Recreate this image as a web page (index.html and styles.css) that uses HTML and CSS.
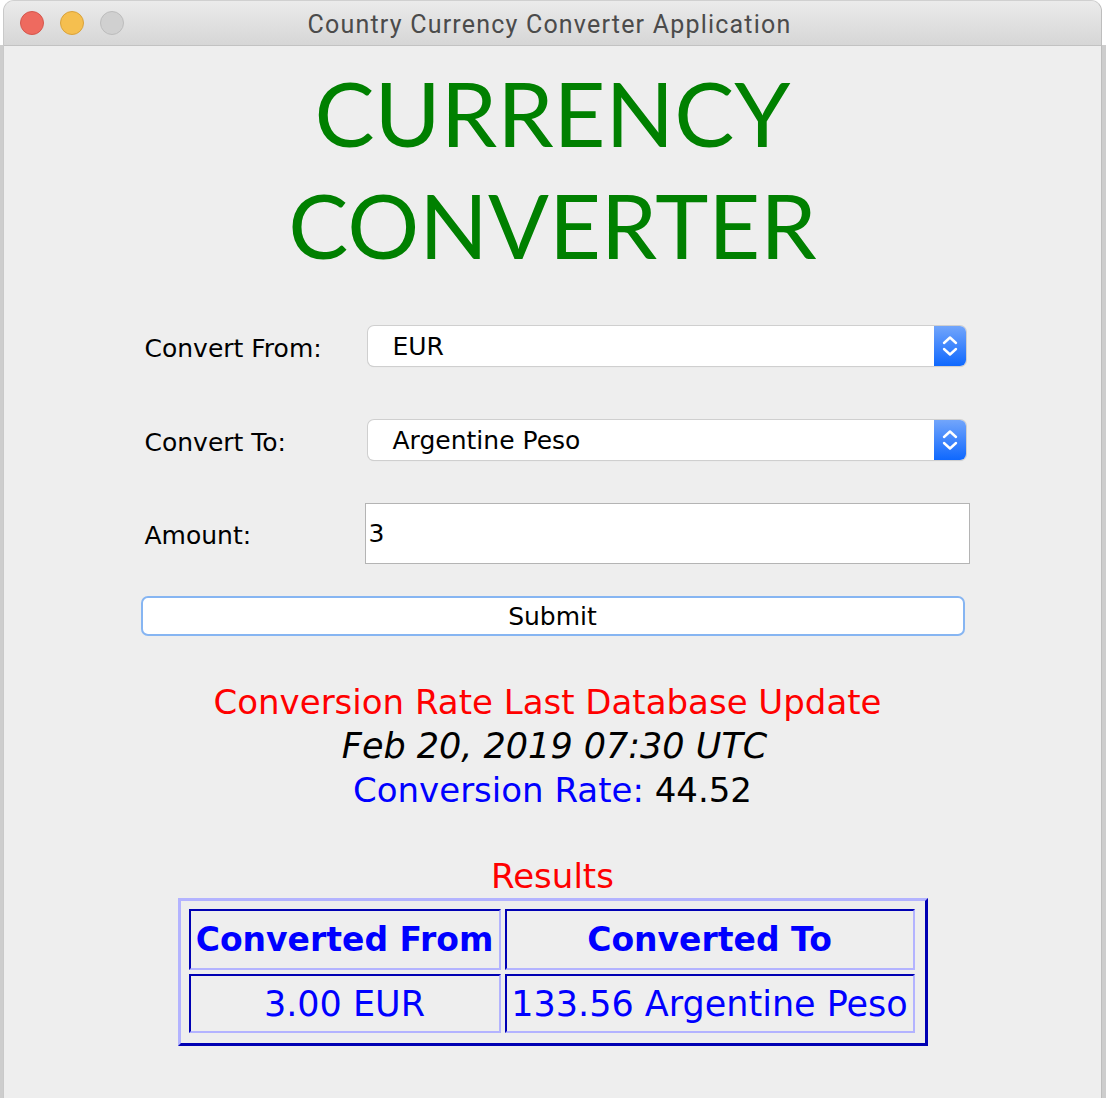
FILE: index.html
```html
<!DOCTYPE html>
<html>
<head>
<meta charset="utf-8">
<link rel="stylesheet" href="styles.css">
</head>
<body>
<div class="window">
  <div class="titlebar">
    <div class="lights">
      <span class="light red"></span>
      <span class="light yellow"></span>
      <span class="light grey"></span>
    </div>
    <div class="title">Country Currency Converter Application</div>
  </div>
  <div class="content">
    <h1 class="headline"><span>CURRENCY</span><span>CONVERTER</span></h1>
    <div class="form">
      <div class="row row-from">
        <label class="label">Convert From:</label>
        <div class="combo">
          <span class="combo-text">EUR</span>
          <span class="combo-btn">
            <svg width="18" height="24" viewBox="0 0 18 24"><path d="M3 9 L9 3.5 L15 9 M3 15 L9 20.5 L15 15" fill="none" stroke="#fff" stroke-width="2.4" stroke-linecap="round" stroke-linejoin="round"/></svg>
          </span>
        </div>
      </div>
      <div class="row row-to">
        <label class="label">Convert To:</label>
        <div class="combo">
          <span class="combo-text">Argentine Peso</span>
          <span class="combo-btn">
            <svg width="18" height="24" viewBox="0 0 18 24"><path d="M3 9 L9 3.5 L15 9 M3 15 L9 20.5 L15 15" fill="none" stroke="#fff" stroke-width="2.4" stroke-linecap="round" stroke-linejoin="round"/></svg>
          </span>
        </div>
      </div>
      <div class="row row-amount">
        <label class="label">Amount:</label>
        <div class="field">3</div>
      </div>
      <div class="submit">Submit</div>
    </div>
    <div class="info">
      <div class="info-red">Conversion Rate Last Database Update</div>
      <div class="info-date">Feb 20, 2019 07:30 UTC</div>
      <div class="info-rate"><span class="blue">Conversion Rate:</span> 44.52</div>
    </div>
    <div class="results-title">Results</div>
    <table class="results">
      <tr>
        <th class="c1">Converted From</th>
        <th class="c2">Converted To</th>
      </tr>
      <tr>
        <td class="c1">3.00 EUR</td>
        <td class="c2">133.56 Argentine Peso</td>
      </tr>
    </table>
  </div>
</div>
</body>
</html>
```

FILE: styles.css
```css
html, body {
  margin: 0;
  padding: 0;
  height: 1098px;
  overflow: hidden;
}

body {
  background: linear-gradient(to bottom, #ffffff 0, #ffffff 45px, #cdcdcd 45px, #cdcdcd 100%);
}

.window {
  margin-left: 3px;
  width: 1099px;
  height: 1100px;
  background: #eeeeee;
  border-left: 1px solid #c9c9c9;
  border-right: 1px solid #bdbdbd;
  border-top: 1px solid #d0d0d0;
  border-radius: 11px 11px 0 0;
  overflow: hidden;
  box-sizing: border-box;
}

.titlebar {
  height: 44px;
  background: linear-gradient(#ebebeb, #d6d6d6);
  border-bottom: 1px solid #c2c2c2;
  display: flex;
  align-items: center;
  justify-content: center;
  position: relative;
}

.lights {
  position: absolute;
  left: 16px;
  top: 10px;
  display: flex;
  gap: 16px;
}

.light {
  width: 24px;
  height: 24px;
  border-radius: 50%;
  box-sizing: border-box;
}
.light.red { background: #ee6a5f; border: 1px solid #d4574d; }
.light.yellow { background: #f5bf4f; border: 1px solid #d9a23b; }
.light.grey { background: #d0d0d0; border: 1px solid #bcbcbc; }

.title {
  font-family: Roboto, "Noto Sans", sans-serif;
  font-size: 25px;
  letter-spacing: 1.2px;
  color: #4b4b4b;
  margin-top: 2px;
  margin-right: 6px;
}

.content {
  display: flex;
  flex-direction: column;
  align-items: center;
}

.headline {
  margin: 10px 0 0 0;
  font-family: Lato, "DejaVu Sans", sans-serif;
  font-weight: 400;
  font-size: 90px;
  line-height: 112px;
  color: #008000;
  display: flex;
  flex-direction: column;
  align-items: center;
}

.form {
  width: 824px;
  margin-top: 46px;
  font-family: "DejaVu Sans", sans-serif;
  font-size: 25px;
  color: #000;
}

.row {
  display: flex;
  align-items: center;
}

.label {
  flex: 0 0 227px;
  padding-left: 4px;
  padding-top: 4px;
  box-sizing: border-box;
}

.row-to { margin-top: 54px; }
.row-amount { margin-top: 43px; }

.combo {
  flex: 0 0 598px;
  height: 40px;
  background: #fff;
  border-radius: 6px;
  box-shadow: 0 0 0 1px #cfcfcf, 0 1px 1px rgba(0,0,0,0.15);
  display: flex;
  align-items: center;
  justify-content: space-between;
}

.combo-text {
  padding-left: 25px;
}

.combo-btn {
  width: 32px;
  height: 40px;
  border-radius: 0 6px 6px 0;
  background: linear-gradient(#72a5fb, #0f68fe);
  display: flex;
  align-items: center;
  justify-content: center;
}

.field {
  margin-left: -3px;
  flex: 0 0 605px;
  height: 61px;
  box-sizing: border-box;
  background: #fff;
  border: 1px solid #b4b4b4;
  padding-left: 3px;
  display: flex;
  align-items: center;
}

.submit {
  margin-top: 32px;
  height: 40px;
  box-sizing: border-box;
  background: #fff;
  border: 2px solid #86b5f2;
  border-radius: 7px;
  display: flex;
  align-items: center;
  justify-content: center;
}

.info {
  margin-top: 44px;
  font-family: "DejaVu Sans", sans-serif;
  font-size: 34px;
  line-height: 44px;
  text-align: center;
}

.info-red { color: #ff0000; margin-right: 10px; }
.info-date { font-style: italic; color: #000; font-size: 35px; margin-left: 4px; }
.info-rate { color: #000; }
.blue { color: #0000ff; }

.results-title {
  margin-top: 42px;
  font-family: "DejaVu Sans", sans-serif;
  font-size: 34px;
  line-height: 44px;
  color: #ff0000;
}

.results {
  margin-top: 0;
  border-collapse: separate;
  border-spacing: 4px;
  padding: 4px 6px 6px 4px;
  border-style: solid;
  border-width: 3px;
  border-color: #b3b3ff #0000b3 #0000b3 #b3b3ff;
  font-family: "DejaVu Sans", sans-serif;
  font-size: 35px;
  color: #0000ff;
}

.results th, .results td {
  border-style: solid;
  border-width: 2px;
  border-color: #0000b3 #b3b3ff #b3b3ff #0000b3;
  text-align: center;
  padding: 0;
  white-space: nowrap;
}

.results th {
  font-weight: bold;
  font-size: 33px;
  height: 57px;
}

.results td {
  height: 55px;
}

.results .c1 { width: 308px; }
.results .c2 { width: 406px; }
```
